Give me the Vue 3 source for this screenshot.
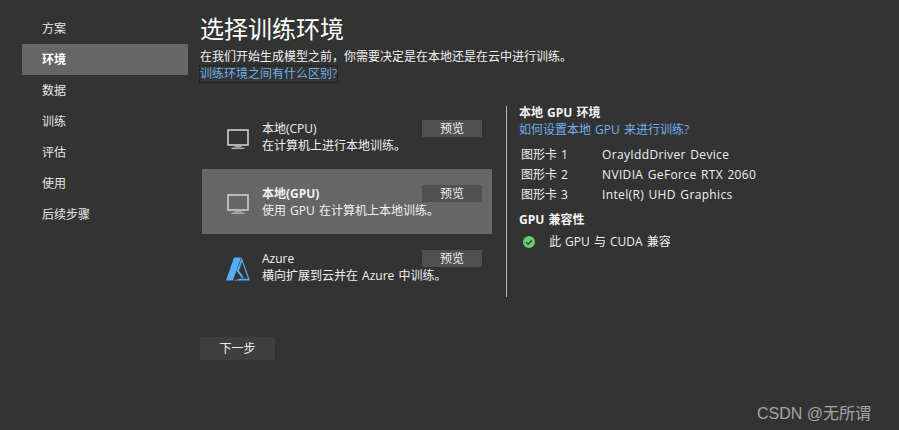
<script setup>
const nav = ['方案', '环境', '数据', '训练', '评估', '使用', '后续步骤']
const envs = [
  { name: '本地(CPU)', desc: '在计算机上进行本地训练。', icon: 'pc' },
  { name: '本地(GPU)', desc: '使用 GPU 在计算机上本地训练。', icon: 'pc', active: true },
  { name: 'Azure', desc: '横向扩展到云并在 Azure 中训练。', icon: 'azure' },
]
const gpus = [
  ['图形卡 1', 'OrayIddDriver Device'],
  ['图形卡 2', 'NVIDIA GeForce RTX 2060'],
  ['图形卡 3', 'Intel(R) UHD Graphics'],
]
</script>

<template>
  <div class="page">
    <nav class="nav">
      <div v-for="n in nav" :key="n" class="nav-item" :class="{ on: n === '环境' }">{{ n }}</div>
    </nav>
    <main class="main">
      <h1 class="title">选择训练环境</h1>
      <p class="intro">在我们开始生成模型之前，你需要决定是在本地还是在云中进行训练。</p>
      <a class="link focus">训练环境之间有什么区别?</a>
      <div class="columns">
        <div class="cards">
          <div v-for="e in envs" :key="e.name" class="card" :class="{ active: e.active }">
            <div class="icon-box">
              <svg v-if="e.icon === 'pc'" width="22" height="21" viewBox="0 0 22 21">
                <rect x="1" y="1" width="20" height="15" fill="none" stroke="#cfcfcf" stroke-width="1.6" />
                <rect x="7.5" y="16.5" width="7" height="2" fill="#a8a8a8" />
                <rect x="4.5" y="18.5" width="13" height="1.6" fill="#a8a8a8" />
              </svg>
              <svg v-else width="24" height="24" viewBox="0 0 24 24">
                <path d="M8 0.5 H15 L7 23.5 H0 Z" fill="#55aef5" />
                <path d="M15.6 0.5 L24 23.5 H7.5 L16 21 L10.5 14 L13.5 6.5 Z" fill="#55aef5" />
                <path d="M16 4.5 L22 21.8 H14 L17.8 20.6 L13 13.8 Z" fill="#333" />
              </svg>
            </div>
            <div class="card-text">
              <div class="card-name">{{ e.name }}</div>
              <div>{{ e.desc }}</div>
            </div>
            <button class="preview">预览</button>
          </div>
        </div>
        <aside class="detail">
          <div class="strong head">本地 GPU 环境</div>
          <a class="link">如何设置本地 GPU 来进行训练?</a>
          <dl class="gpus">
            <div v-for="g in gpus" :key="g[0]" class="gpu">
              <dt>{{ g[0] }}</dt>
              <dd>{{ g[1] }}</dd>
            </div>
          </dl>
          <div class="strong compat">GPU 兼容性</div>
          <div class="ok">
            <svg width="12" height="12" viewBox="0 0 12 12">
              <circle cx="6" cy="6" r="6" fill="#6ccb6e" />
              <path d="M3.2 6.2 L5.2 8.1 L8.9 4.2" fill="none" stroke="#2b3a2b" stroke-width="1.3" />
            </svg>
            <span>此 GPU 与 CUDA 兼容</span>
          </div>
        </aside>
      </div>
      <button class="next">下一步</button>
    </main>
    <div class="mark">CSDN @无所谓</div>
  </div>
</template>

<style>
html, body { margin: 0; background: #333; }
</style>

<style scoped>
.page {
  position: relative;
  display: flex;
  width: 899px;
  height: 430px;
  overflow: hidden;
  background: #333;
  color: #f0f0f0;
  font: 12px/16px "Open Sans", "Noto Sans CJK SC", sans-serif;
  word-spacing: 1px;
}
.nav { width: 166px; margin: 13px 12px 0 22px; }
.nav-item { height: 31px; padding-left: 20px; line-height: 32px; color: #e6e6e6; }
.nav-item.on { background: #666; font-weight: 700; color: #fff; }
.main { width: 690px; }
.title { margin: 13px 0 0; font-size: 24px; line-height: 32px; font-weight: 400; color: #fff; }
.intro { margin: 4px 0 0; line-height: 16px; }
.link { display: block; line-height: 16px; color: #6fb1ea; }
.focus { width: max-content; margin-top: 1px; outline: 1px dotted #151515; }
.columns { display: flex; margin-top: 22px; margin-left: 2px; }
.cards { width: 290px; }
.card { display: flex; align-items: center; height: 65px; padding-left: 25px; box-sizing: border-box; position: relative; }
.card.active { background: #666; }
.card.active .card-name { font-weight: 700; }
.icon-box { flex: none; display: flex; justify-content: center; width: 24px; margin: 5px 12px 0 -1px; }
.card-text { line-height: 17px; margin-top: 1px; }
.preview {
  position: absolute;
  top: 16px;
  left: 220px;
  width: 60px;
  height: 17px;
  padding: 0;
  border: 0;
  background: #505050;
  color: #f0f0f0;
  font: inherit;
  line-height: 17px;
}
.detail { margin: 2px 0 0 14px; height: 191px; padding-left: 12px; border-left: 1px solid #b4b4b4; }
.strong { font-weight: 700; color: #f4f4f4; line-height: 16px; }
.head { margin: -1px 0 1px; }
.gpus { margin: 7px 0 0 2px; }
.gpu { display: flex; height: 20px; line-height: 20px; }
dt { width: 81px; }
dd { margin: 0; letter-spacing: 0.35px; }
.compat { margin-top: 7px; }
.ok { display: flex; align-items: center; gap: 14px; margin: 6px 0 0 4px; line-height: 16px; }
.next {
  display: block;
  width: 75px;
  height: 23px;
  margin-top: 38px;
  padding: 0;
  border: 0;
  background: #3e3e3e;
  color: #f0f0f0;
  font: inherit;
  line-height: 23px;
}
.mark { position: absolute; right: 28px; top: 404px; font: 16px/20px "Liberation Sans", "Noto Sans CJK SC", sans-serif; color: #a6a6a6; word-spacing: 0; }
</style>
